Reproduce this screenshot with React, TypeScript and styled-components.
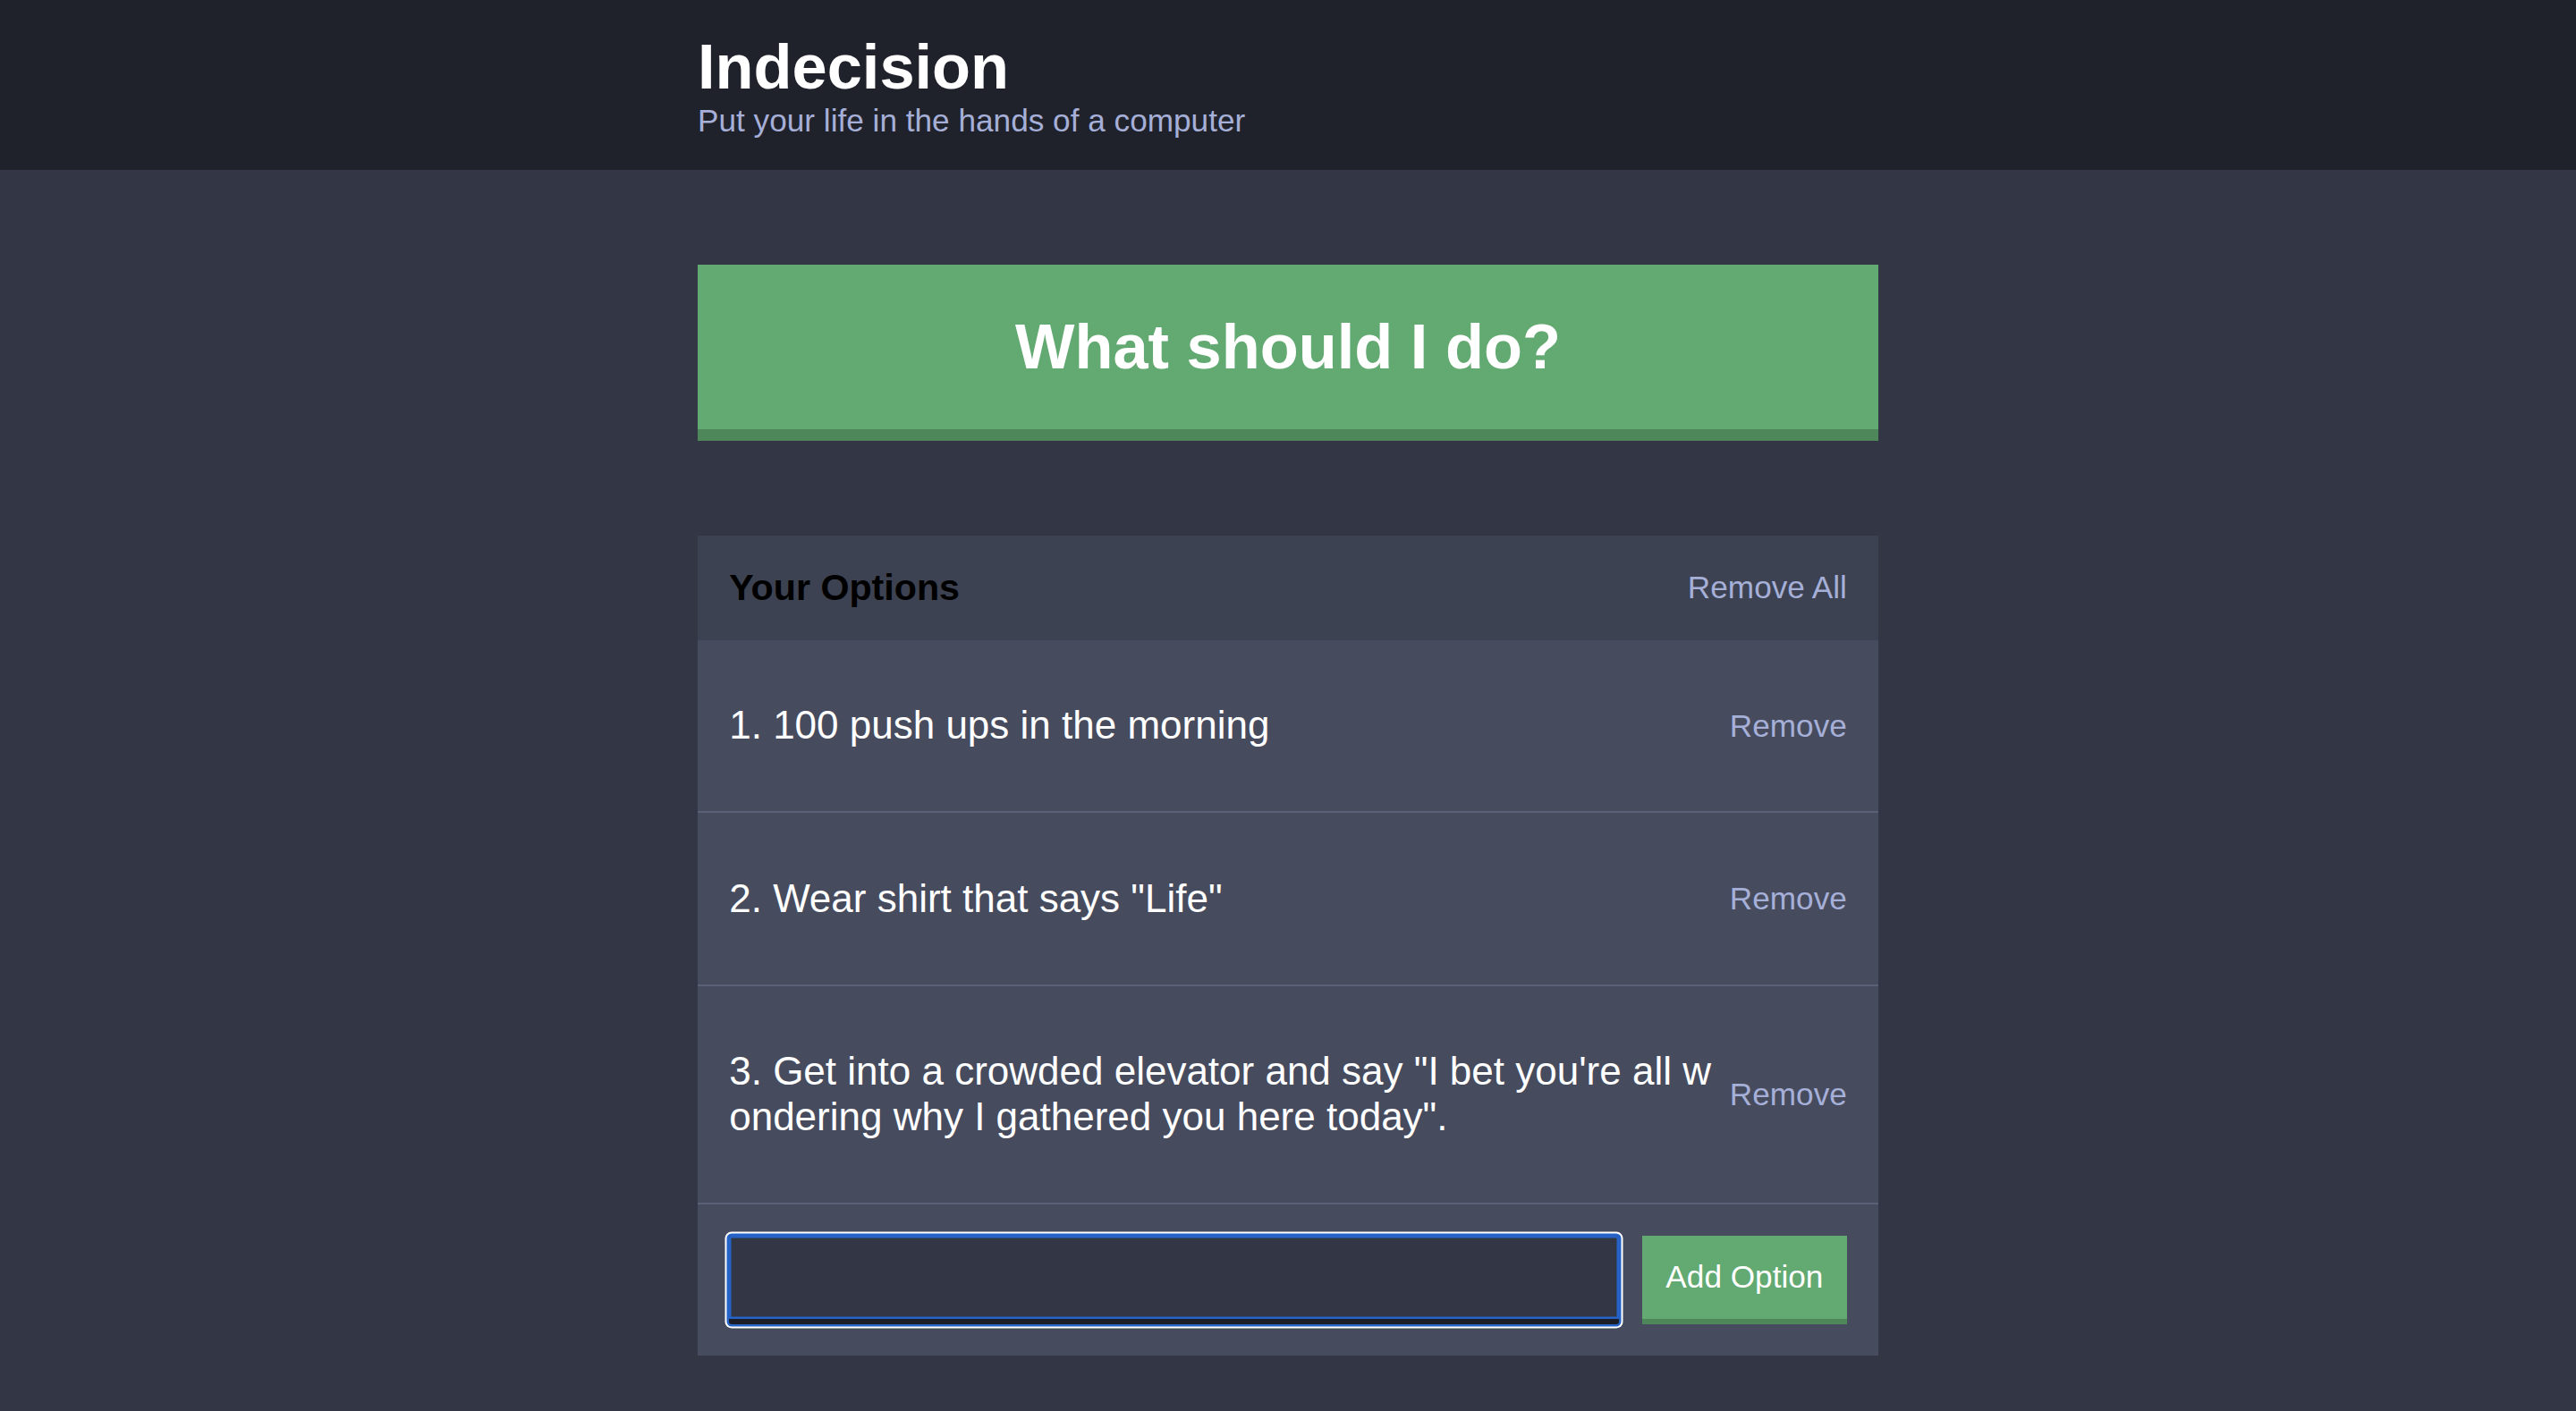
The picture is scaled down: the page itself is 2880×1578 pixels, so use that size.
import React from "react";
import styled, { createGlobalStyle } from "styled-components";

const GlobalStyle = createGlobalStyle`
  html, body {
    margin: 0;
    padding: 0;
    background: #333745;
    min-height: 100%;
  }
  body {
    font-family: "Liberation Sans", Arial, Helvetica, sans-serif;
    font-size: 35.2px;
    color: #ffffff;
  }
  * { box-sizing: content-box; }
`;

const Header = styled.header`
  background: #20222b;
  padding: 35.2px 0;
  margin-bottom: 105.6px;
`;

const Container = styled.div`
  max-width: 1320px;
  margin: 0 auto;
  padding: 0 35.2px;
`;

const Title = styled.h1`
  margin: 0;
  font-size: 70.4px;
  line-height: 1.13;
  font-weight: bold;
  color: #ffffff;
`;

const Subtitle = styled.h2`
  margin: 0;
  font-size: 35.2px;
  line-height: 1.15;
  font-weight: normal;
  color: #a5afd7;
`;

const BigButton = styled.button`
  display: block;
  width: 100%;
  box-sizing: border-box;
  background: #62a972;
  border: none;
  border-bottom: 13.2px solid #4e875a;
  color: #ffffff;
  font-family: inherit;
  font-weight: bold;
  font-size: 70.4px;
  line-height: 1.12;
  padding: 52.8px;
  margin: 0 0 105.6px;
  cursor: pointer;
`;

const Widget = styled.section`
  background: #464b5e;
  margin-bottom: 105.6px;
`;

const WidgetHeader = styled.div`
  background: #3c4251;
  display: flex;
  justify-content: space-between;
  align-items: center;
  padding: 35.2px;
`;

const WidgetTitle = styled.h3`
  margin: 0;
  font-size: 41.2px;
  line-height: 1.13;
  font-weight: bold;
  color: #000000;
`;

const LinkButton = styled.button`
  background: none;
  border: none;
  padding: 0;
  color: #a5afd7;
  font-family: inherit;
  font-size: 35.2px;
  cursor: pointer;
  flex-shrink: 0;
`;

const OptionRow = styled.div`
  display: flex;
  justify-content: space-between;
  align-items: center;
  padding: 70.4px 35.2px;
  border-bottom: 2.2px solid #5b6078;
`;

const OptionText = styled.p`
  margin: 0;
  font-size: 44px;
  line-height: 1.15;
  color: #ffffff;
  word-break: break-all;
  padding-right: 20px;
`;

const AddForm = styled.form`
  display: flex;
  align-items: flex-start;
  padding: 35.2px;
  margin: 0;
`;

const Input = styled.input`
  flex-grow: 1;
  background: #333745;
  border: none;
  border-bottom: 6.6px solid #1c1e27;
  border-radius: 3px;
  color: #a5afd7;
  caret-color: #a5afd7;
  font-family: inherit;
  font-size: 35.2px;
  padding: 26.4px;
  margin-right: 26.4px;
  outline: none;
  box-shadow: inset 0 0 0 2.5px #2563c6, 0 0 0 2.5px #2563c6, 0 0 0 4.5px #ffffff;
`;

const AddButton = styled.button`
  background: #62a972;
  border: none;
  border-bottom: 6.6px solid #4e875a;
  color: #ffffff;
  font-family: inherit;
  font-size: 35.2px;
  padding: 26.4px;
  cursor: pointer;
`;

const options = [
  "100 push ups in the morning",
  'Wear shirt that says "Life"',
  'Get into a crowded elevator and say "I bet you\'re all wondering why I gathered you here today".',
];

export default function App() {
  return (
    <>
      <GlobalStyle />
      <Header>
        <Container>
          <Title>Indecision</Title>
          <Subtitle>Put your life in the hands of a computer</Subtitle>
        </Container>
      </Header>
      <Container>
        <BigButton>What should I do?</BigButton>
        <Widget>
          <WidgetHeader>
            <WidgetTitle>Your Options</WidgetTitle>
            <LinkButton>Remove All</LinkButton>
          </WidgetHeader>
          {options.map((o, i) => (
            <OptionRow key={i}>
              <OptionText>
                {i + 1}. {o}
              </OptionText>
              <LinkButton>Remove</LinkButton>
            </OptionRow>
          ))}
          <AddForm onSubmit={(e) => e.preventDefault()}>
            <Input type="text" name="option" autoFocus />
            <AddButton>Add Option</AddButton>
          </AddForm>
        </Widget>
      </Container>
    </>
  );
}
